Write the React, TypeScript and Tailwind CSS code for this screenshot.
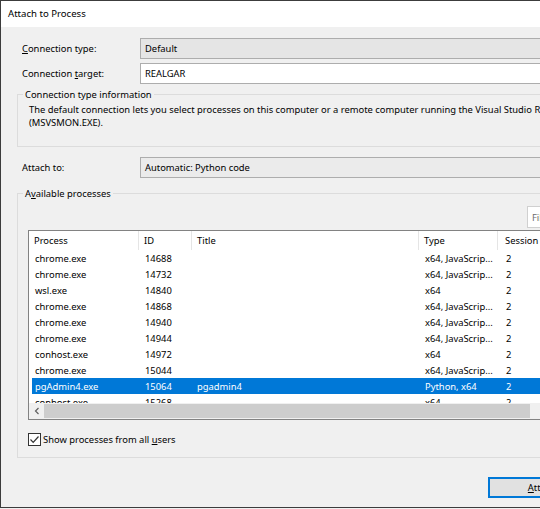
import React from "react";

interface ProcessRow {
  name: string;
  id: string;
  title: string;
  type: string;
  session: string;
  selected?: boolean;
}

const rows: ProcessRow[] = [
  { name: "chrome.exe", id: "14688", title: "", type: "x64, JavaScrip...", session: "2" },
  { name: "chrome.exe", id: "14732", title: "", type: "x64, JavaScrip...", session: "2" },
  { name: "wsl.exe", id: "14840", title: "", type: "x64", session: "2" },
  { name: "chrome.exe", id: "14868", title: "", type: "x64, JavaScrip...", session: "2" },
  { name: "chrome.exe", id: "14940", title: "", type: "x64, JavaScrip...", session: "2" },
  { name: "chrome.exe", id: "14944", title: "", type: "x64, JavaScrip...", session: "2" },
  { name: "conhost.exe", id: "14972", title: "", type: "x64", session: "2" },
  { name: "chrome.exe", id: "15044", title: "", type: "x64, JavaScrip...", session: "2" },
  { name: "pgAdmin4.exe", id: "15064", title: "pgadmin4", type: "Python, x64", session: "2", selected: true },
  { name: "conhost.exe", id: "15268", title: "", type: "x64", session: "2" },
];

const FieldRow: React.FC<{ label: React.ReactNode; value: string; bg: string; className?: string }> = ({
  label,
  value,
  bg,
  className,
}) => (
  <div className={`flex items-center h-[21px] ${className ?? ""}`}>
    <div className="w-[139px] pl-[21px] shrink-0">{label}</div>
    <div className={`w-[440px] h-[21px] shrink-0 border border-[#adadad] flex items-center px-[4px] ${bg}`}>
      {value}
    </div>
  </div>
);

const App: React.FC = () => {
  return (
    <div
      className="w-[540px] h-[509px] overflow-hidden bg-[#f0f0f0] text-[9.4px] text-black leading-[13px]"
      style={{ fontFamily: '"Noto Sans", "Liberation Sans", sans-serif' }}
    >
      <div className="w-[700px] h-[508px] border-t border-l border-b border-[#3c3c3c] flex flex-col">
        {/* title bar */}
        <div className="h-[26px] bg-white flex items-center pl-[7px] pb-[1px] text-[9.6px] shrink-0">
          Attach to Process
        </div>

        <div className="flex flex-col">
          <FieldRow
            className="mt-[11px]"
            label={
              <span>
                <span className="underline">C</span>onnection type:
              </span>
            }
            value="Default"
            bg="bg-[#e5e5e5]"
          />
          <FieldRow
            className="mt-[4px]"
            label={
              <span>
                Connection <span className="underline">t</span>arget:
              </span>
            }
            value="REALGAR"
            bg="bg-white"
          />

          <fieldset className="ml-[16px] mt-[4px] w-[600px] border border-[#dcdcdc] pt-[2px] pb-[17px]">
            <legend className="ml-[5px] px-[2px] leading-[13px]">Connection type information</legend>
            <div className="pl-[11px]">
              <p className="whitespace-nowrap">
                The default connection lets you select processes on this computer or a remote computer running the
                Visual Studio Remote Debugging Monitor
              </p>
              <p>(MSVSMON.EXE).</p>
            </div>
          </fieldset>

          <FieldRow className="mt-[10px]" label="Attach to:" value="Automatic: Python code" bg="bg-[#ebebeb]" />

          <fieldset className="ml-[16px] mt-[9px] w-[640px] border border-[#dcdcdc] pt-[6px] pb-[11px]">
            <legend className="ml-[5px] px-[2px] leading-[13px]">
              A<span className="underline">v</span>ailable processes
            </legend>

            <div className="pl-[10px]">
              <div className="ml-[499px] w-[120px] h-[22px] bg-white border border-[#d0d0d0] flex items-center px-[4px] text-[#6d6d6d]">
                Filter processes
              </div>

              {/* process list */}
              <div className="mt-[2px] w-[600px] h-[190px] border border-[#828282] bg-white flex flex-col overflow-hidden">
                <div className="h-[19px] flex shrink-0">
                  <div className="w-[110px] pl-[5px] flex items-center border-r border-[#e5e5e5]">Process</div>
                  <div className="w-[53px] pl-[5px] flex items-center border-r border-[#e5e5e5]">ID</div>
                  <div className="w-[227px] pl-[5px] flex items-center border-r border-[#e5e5e5]">Title</div>
                  <div className="w-[79px] pl-[5px] flex items-center border-r border-[#e5e5e5]">Type</div>
                  <div className="w-[80px] pl-[7px] flex items-center">Session</div>
                </div>
                <div className="h-[153px] overflow-hidden shrink-0">
                  {rows.map((r, i) => (
                    <div
                      key={i}
                      className={`ml-[3px] h-[16px] flex items-center ${r.selected ? "bg-[#0078d7] text-white" : ""}`}
                    >
                      <div className="w-[107px] pl-[3px]">{r.name}</div>
                      <div className="w-[53px] pl-[6px]">{r.id}</div>
                      <div className="w-[227px] pl-[5px]">{r.title}</div>
                      <div className="w-[79px] pl-[6px] whitespace-nowrap">{r.type}</div>
                      <div className="w-[80px] pl-[8px]">{r.session}</div>
                    </div>
                  ))}
                </div>
                {/* horizontal scrollbar */}
                <div className="h-[16px] flex bg-[#f0f0f0] shrink-0">
                  <div className="w-[15px] flex items-center justify-center">
                    <svg width="8" height="8" viewBox="0 0 8 8">
                      <path d="M5.5 1 L2.5 4 L5.5 7" fill="none" stroke="#606060" strokeWidth="1.2" />
                    </svg>
                  </div>
                  <div className="w-[486px] my-[1px] bg-[#cdcdcd]" />
                </div>
              </div>

              <label className="mt-[13px] flex items-center h-[13px]">
                <span className="w-[13px] h-[13px] border border-[#333333] bg-white flex items-center justify-center">
                  <svg width="11" height="11" viewBox="0 0 11 11">
                    <path d="M1.5 5.5 L4.2 8.3 L9.5 2.5" fill="none" stroke="#333333" strokeWidth="1.2" />
                  </svg>
                </span>
                <span className="ml-[2px]">
                  Show processes from all <span className="underline">u</span>sers
                </span>
              </label>
            </div>
          </fieldset>

          <div className="mt-[19px] ml-[487px] w-[108px] h-[21px] border-2 border-[#0078d7] bg-[#e1e1e1] flex items-center justify-center">
            <span>
              <span className="underline">A</span>ttach
            </span>
          </div>
        </div>
      </div>
    </div>
  );
};

export default App;
